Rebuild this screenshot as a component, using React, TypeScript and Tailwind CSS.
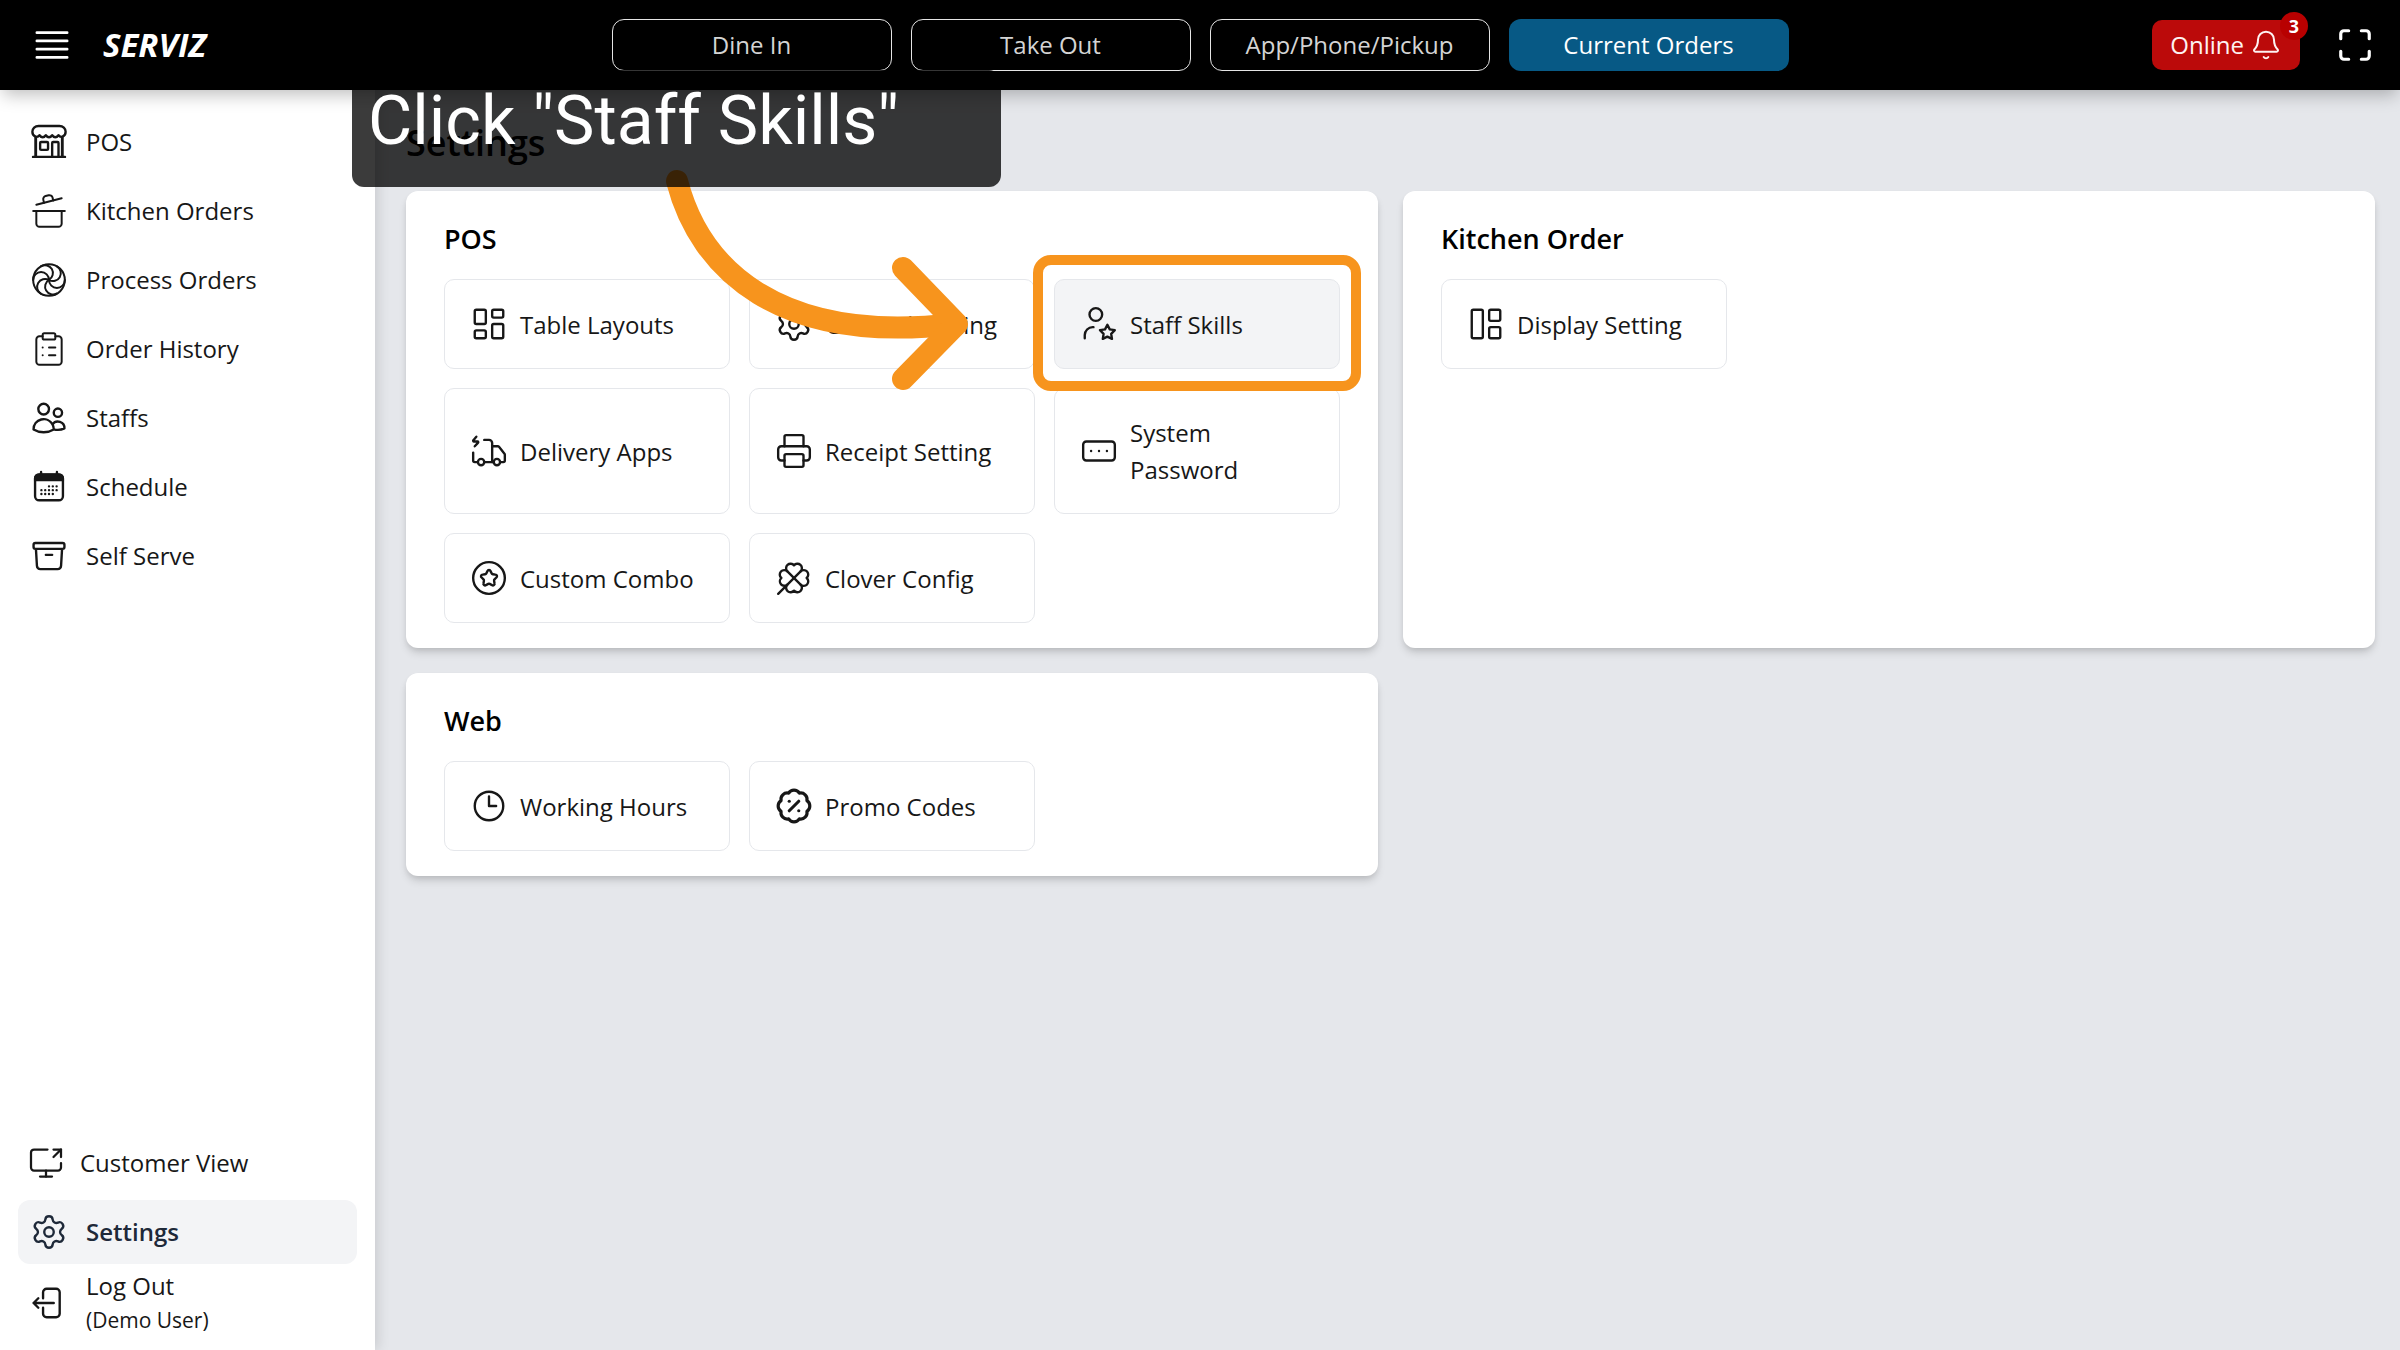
import React from 'react';
import {
  BadgePercent,
  Bell,
  CircleStar,
  ClipboardList,
  Clover,
  CookingPot,
  LayoutDashboard,
  LayoutPanelLeft,
  LoaderPinwheel,
  Maximize,
  Printer,
  RectangleEllipsis,
  ScreenShare,
  Settings,
  TruckElectric,
} from 'lucide-react';
import {
  HiOutlineArchiveBox,
  HiOutlineArrowLeftStartOnRectangle,
  HiOutlineBars4,
  HiOutlineClock,
  HiOutlineUsers,
} from 'react-icons/hi2';
import clsx from 'clsx';

interface LinkItem {
  label: string;
  icon: React.ReactNode;
  active?: boolean;
}

const StoreIcon: React.FC<{ className?: string }> = ({ className }) => (
  <svg viewBox="0 0 24 24" fill="none" stroke="currentColor" strokeWidth="1.5" strokeLinecap="round" strokeLinejoin="round" className={className}>
    <path d="M5.4 1.9h13.2c2.2 0 3.9 1.6 3.9 3.7 0 1.5-.8 2.6-2 3-.9.3-1.9 0-2.5-.9-.5.9-1.3 1.3-2 1.3s-1.5-.4-2-1.3c-.5.9-1.3 1.3-2 1.3s-1.5-.4-2-1.3c-.5.9-1.3 1.3-2 1.3s-1.5-.4-2-1.3c-.6.9-1.6 1.2-2.5.9-1.2-.4-2-1.5-2-3 0-2.1 1.7-3.7 3.9-3.7Z" />
    <path d="M3.6 9v12M20.4 9v12" strokeWidth="1.8" />
    <path d="M1.9 21.4h20.2" />
    <rect x="6.4" y="12" width="5" height="5" rx=".6" />
    <path d="M14 21.2v-8.6c0-.4.2-.6.6-.6h2.8c.4 0 .6.2.6.6v8.6" />
  </svg>
);

const CalendarIcon: React.FC<{ className?: string }> = ({ className }) => (
  <svg viewBox="0 0 24 24" fill="currentColor" className={className}>
    <rect x="3.2" y="4" width="17.6" height="16.4" rx="2.6" fill="none" stroke="currentColor" strokeWidth="1.5" />
    <path d="M2.5 8.4V6.4a3 3 0 0 1 3-3h13a3 3 0 0 1 3 3v2Z" />
    <path d="M7 2.5v2M17 2.5v2" stroke="currentColor" strokeWidth="1.5" strokeLinecap="round" />
    <path
      d="M12 11.6h.01M14.4 11.6h.01M16.8 11.6h.01M7.2 14h.01M9.6 14h.01M12 14h.01M14.4 14h.01M16.8 14h.01M7.2 16.4h.01M9.6 16.4h.01M12 16.4h.01M14.4 16.4h.01"
      stroke="currentColor"
      strokeWidth="1.5"
      strokeLinecap="round"
    />
  </svg>
);

const UserStarIcon: React.FC<{ className?: string }> = ({ className }) => (
  <svg viewBox="0 0 24 24" fill="none" stroke="currentColor" strokeWidth="1.5" strokeLinecap="round" strokeLinejoin="round" className={className}>
    <circle cx="10" cy="6" r="4" />
    <path d="M3 21v-2a5 5 0 0 1 5-5h.5" />
    <path d="m17.3 12.5 1.5 2.9 3.2.5-2.3 2.3.5 3.2-2.9-1.4-2.9 1.4.5-3.2-2.3-2.3 3.2-.5z" />
  </svg>
);

const navIcon = 'size-[38px] shrink-0';

const mainLinks: LinkItem[] = [
  { label: 'POS', icon: <StoreIcon className={navIcon} /> },
  { label: 'Kitchen Orders', icon: <CookingPot strokeWidth={1.25} className={navIcon} /> },
  { label: 'Process Orders', icon: <LoaderPinwheel strokeWidth={1.25} className={navIcon} /> },
  { label: 'Order History', icon: <ClipboardList strokeWidth={1.25} className={navIcon} /> },
  { label: 'Staffs', icon: <HiOutlineUsers className={navIcon} /> },
  { label: 'Schedule', icon: <CalendarIcon className={navIcon} /> },
  { label: 'Self Serve', icon: <HiOutlineArchiveBox className={navIcon} /> },
];

const posItems: LinkItem[] = [
  { label: 'Table Layouts', icon: <LayoutDashboard strokeWidth={1.5} className={navIcon} /> },
  { label: 'General Setting', icon: <Settings strokeWidth={1.5} className={navIcon} /> },
  { label: 'Staff Skills', active: true, icon: <UserStarIcon className={navIcon} /> },
  { label: 'Delivery Apps', icon: <TruckElectric strokeWidth={1.5} className={navIcon} /> },
  { label: 'Receipt Setting', icon: <Printer strokeWidth={1.5} className={navIcon} /> },
  { label: 'System Password', icon: <RectangleEllipsis strokeWidth={1.5} className={navIcon} /> },
  { label: 'Custom Combo', icon: <CircleStar strokeWidth={1.5} className={navIcon} /> },
  { label: 'Clover Config', icon: <Clover strokeWidth={1.5} className={navIcon} /> },
];

const kitchenItems: LinkItem[] = [
  { label: 'Display Setting', icon: <LayoutPanelLeft strokeWidth={1.5} className={navIcon} /> },
];

const webItems: LinkItem[] = [
  { label: 'Working Hours', icon: <HiOutlineClock className={navIcon} /> },
  { label: 'Promo Codes', icon: <BadgePercent strokeWidth={2} className={navIcon} /> },
];

const SidebarLink: React.FC<{ item: LinkItem }> = ({ item }) => (
  <a
    href="#"
    className={clsx(
      'flex h-16 items-center gap-[18px] rounded-xl px-3',
      item.active ? 'bg-gray-100 font-semibold text-gray-800' : 'text-neutral-900'
    )}
  >
    {item.icon}
    <span>{item.label}</span>
  </a>
);

const SettingsCard: React.FC<{ title: string; items: LinkItem[] }> = ({ title, items }) => (
  <section className="rounded-xl bg-white px-[38px] pt-7 pb-[25px] shadow-[0_6px_9px_-1px_rgba(0,0,0,0.12),0_3px_6px_-2px_rgba(0,0,0,0.12)]">
    <h2 className="mb-5 text-[27px] leading-10 font-semibold text-black">{title}</h2>
    <div className="grid grid-cols-3 gap-[19px]">
      {items.map((item) => (
        <div key={item.label} className="relative flex">
          <button
            type="button"
            className={clsx(
              'flex w-full items-center gap-3 rounded-[10px] border border-gray-200 p-[25px] text-left leading-[37px] text-neutral-900',
              item.active ? 'bg-gray-100' : 'bg-white'
            )}
          >
            {item.icon}
            <span>{item.label}</span>
          </button>
          {item.active && (
            <div className="pointer-events-none absolute -inset-x-[21px] -top-6 -bottom-[22px] z-10 rounded-[18px] border-10 border-[#f7941d]" />
          )}
        </div>
      ))}
    </div>
  </section>
);

const OrderTab: React.FC<{ label: string; active?: boolean }> = ({ label, active }) => (
  <button
    type="button"
    className={clsx(
      'h-[52px] w-[280px] rounded-xl',
      active ? 'bg-[#075985] text-white' : 'border border-neutral-200 text-neutral-300'
    )}
  >
    {label}
  </button>
);

const Header: React.FC = () => (
  <header className="z-10 grid h-[90px] shrink-0 grid-cols-[1fr_auto_1fr] items-center bg-black px-[26px] shadow-[0_8px_16px_-3px_rgba(0,0,0,0.25)]">
    <div className="flex items-center gap-[29px] pl-1 text-white">
      <button type="button" aria-label="Menu">
        <HiOutlineBars4 className="size-11" />
      </button>
      <span className="text-[33px] font-bold italic">SERVIZ</span>
    </div>
    <nav className="flex gap-[19px]">
      <OrderTab label="Dine In" />
      <OrderTab label="Take Out" />
      <OrderTab label="App/Phone/Pickup" />
      <OrderTab label="Current Orders" active />
    </nav>
    <div className="flex items-center justify-end gap-9 text-white">
      <button type="button" className="relative flex h-[50px] items-center gap-1.5 rounded-[10px] bg-[#bb0a0a] px-[18px] text-red-50">
        Online
        <Bell strokeWidth={1.5} className="size-8" />
        <span className="absolute -top-2 -right-2 flex size-7 items-center justify-center rounded-full bg-[#b80000] text-lg font-bold text-white">
          3
        </span>
      </button>
      <button type="button" aria-label="Full screen">
        <Maximize className="size-[38px]" />
      </button>
    </div>
  </header>
);

const Sidebar: React.FC = () => (
  <aside className="flex w-[375px] shrink-0 flex-col justify-between bg-white px-[18px] pt-5 pb-[13px] shadow-[3px_0_12px_rgba(0,0,0,0.12)]">
    <nav className="flex flex-col gap-[5px]">
      {mainLinks.map((item) => (
        <SidebarLink key={item.label} item={item} />
      ))}
    </nav>
    <nav className="flex flex-col gap-[5px]">
      <a href="#" className="flex h-16 items-center gap-4 px-[10px] text-neutral-900">
        <ScreenShare strokeWidth={1.5} className="size-9" />
        <span>Customer View</span>
      </a>
      <SidebarLink item={{ label: 'Settings', active: true, icon: <Settings strokeWidth={1.5} className={navIcon} /> }} />
      <a href="#" className="flex items-center gap-[18px] px-3 text-neutral-900">
        <HiOutlineArrowLeftStartOnRectangle className={navIcon} />
        <span className="flex flex-col leading-[34px]">
          Log Out
          <span className="text-[21px]">(Demo User)</span>
        </span>
      </a>
    </nav>
  </aside>
);

// Walkthrough hint that points at the highlighted tile
const TourHint: React.FC = () => (
  <div className="pointer-events-none absolute top-[70px] left-[352px] z-20 h-[117px] w-[649px]">
    <svg width="649" height="340" viewBox="352 70 649 340" fill="none" stroke="#f7941d" strokeWidth="22" strokeLinecap="round" strokeLinejoin="round" className="absolute top-0 left-0">
      <path d="M677 181C700 270 780 345 955 324" />
      <path d="M903 268L957 324L903 379" />
    </svg>
    <div className="absolute inset-0 rounded-[12px] bg-black/77 px-4 font-['Roboto',sans-serif] text-[68px] leading-[102px] whitespace-nowrap text-white">
      Click "Staff Skills"
    </div>
  </div>
);

export default function App() {
  return (
    <div className="relative flex min-h-screen flex-col bg-gray-200 font-['Open_Sans',sans-serif] text-2xl">
      <Header />
      <div className="flex flex-1">
        <Sidebar />
        <main className="flex-1 pt-[25px] pr-[25px] pl-[31px]">
          <h1 className="mb-5 text-4xl leading-14 font-semibold text-black">Settings</h1>
          <div className="grid grid-cols-2 gap-[25px]">
            <SettingsCard title="POS" items={posItems} />
            <SettingsCard title="Kitchen Order" items={kitchenItems} />
            <SettingsCard title="Web" items={webItems} />
          </div>
        </main>
      </div>
      <TourHint />
    </div>
  );
}
